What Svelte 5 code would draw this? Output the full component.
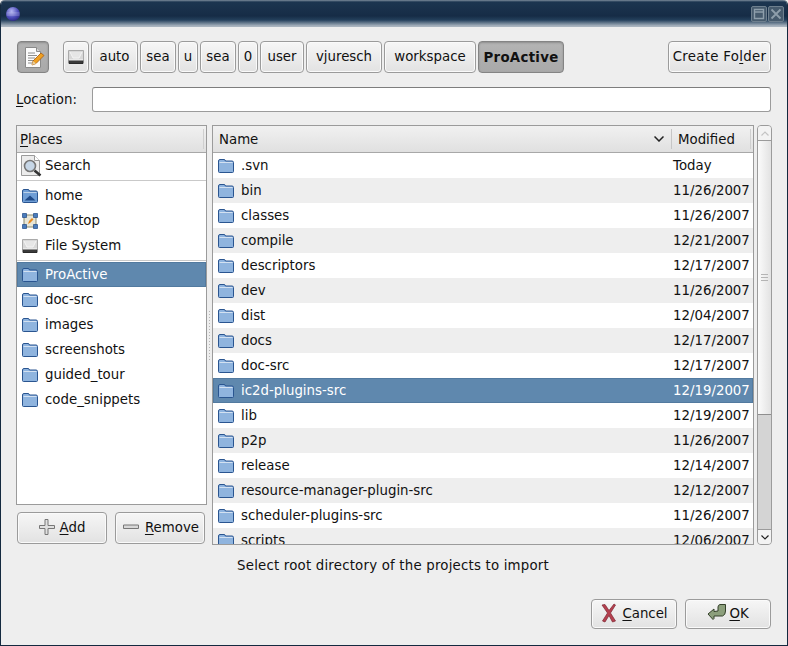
<script>
	// widths come from the toolbar, GTK sizes path buttons a bit unevenly
	const pathParts = [
		{ label: 'auto', width: 47 },
		{ label: 'sea', width: 36 },
		{ label: 'u', width: 20 },
		{ label: 'sea', width: 36 },
		{ label: '0', width: 20 },
		{ label: 'user', width: 44 },
		{ label: 'vjuresch', width: 76 },
		{ label: 'workspace', width: 92 }
	];
	const bookmarks = ['doc-src', 'images', 'screenshots', 'guided_tour', 'code_snippets'];
	const files = [
		['.svn', 'Today'],
		['bin', '11/26/2007'],
		['classes', '11/26/2007'],
		['compile', '12/21/2007'],
		['descriptors', '12/17/2007'],
		['dev', '11/26/2007'],
		['dist', '12/04/2007'],
		['docs', '12/17/2007'],
		['doc-src', '12/17/2007'],
		['ic2d-plugins-src', '12/19/2007'],
		['lib', '12/19/2007'],
		['p2p', '11/26/2007'],
		['release', '12/14/2007'],
		['resource-manager-plugin-src', '12/12/2007'],
		['scheduler-plugins-src', '11/26/2007'],
		['scripts', '12/06/2007']
	];
	const selectedFile = 'ic2d-plugins-src';
</script>

{#snippet folder()}
	<svg class="icon" width="16" height="16" viewBox="0 0 16 16">
		<path d="M.5 3q0-1.500 1.500-1.500h4q1.200 0 1.500 1.500H14q1.500 0 1.500 1.500v9q0 1-1 1h-13q-1 0-1-1z" fill="#8db3df" stroke="#2a5590" />
		<path d="M1.500 4.500h13" stroke="#d3e1f1" />
		<path d="M1.500 5.500h13v8h-13z" fill="#8fb4de" />
	</svg>
{/snippet}

{#snippet drive()}
	<svg class="icon" width="16" height="16" viewBox="0 0 16 16">
		<path d="M.5 1.500h15v10H.5z" fill="#d8d8d8" stroke="#aaa" />
		<path d="M2 3l3 6h6l3-6" fill="#e6e6e6" stroke="#f4f4f4" />
		<path d="M1 11.500h14v3H1z" fill="#3a3a3a" stroke="#2a2a2a" />
		<path d="M1 11h14" stroke="#fafafa" />
	</svg>
{/snippet}

<div class="window">
	<header class="titlebar">
		<svg class="globe" width="16" height="16" viewBox="0 0 16 16">
			<defs>
				<radialGradient id="ball" cx="0.4" cy="0.3" r="0.85">
					<stop offset="0" stop-color="#b4b5f2" />
					<stop offset="0.55" stop-color="#4b4ab8" />
					<stop offset="1" stop-color="#1c1968" />
				</radialGradient>
			</defs>
			<circle cx="8" cy="8" r="7" fill="url(#ball)" />
			<path d="M1.500 7h13M1.500 9h13" stroke="#f0f0fa" stroke-width="0.6" opacity="0.6" />
		</svg>
		<div class="winbuttons">
			<span class="winbtn">
				<svg width="12" height="12" viewBox="0 0 12 12"><path d="M1.500 1.500h9v9h-9zM2 4h8" fill="none" stroke="#8e9eab" stroke-width="1.400" /></svg>
			</span>
			<span class="winbtn">
				<svg width="12" height="12" viewBox="0 0 12 12"><path d="M1.500 1.500l9 9M10.500 1.500l-9 9" fill="none" stroke="#8e9eab" stroke-width="1.800" /></svg>
			</span>
		</div>
	</header>

	<main class="content">
		<div class="toolbar">
			<button class="btn edit active">
				<svg width="24" height="24" viewBox="0 0 24 24">
					<path d="M4.500 2.500h11l4 4v16h-15z" fill="#fbfbfb" stroke="#8a8a8a" />
					<path d="M15.500 2.500v4h4" fill="#d6d6d6" stroke="#8a8a8a" />
					<path d="M7 8h7M7 10.500h9M7 13h7M7 15.500h6M7 18h5" stroke="#8e8e8e" />
					<path d="M11 20l1-4 8-8 3 2.500-8 8z" fill="#f0a020" stroke="#a85c10" stroke-width="0.8" />
					<path d="M11 20l1-4 3 2.500z" fill="#e8d0a0" />
				</svg>
			</button>
			<div class="path">
				<button class="btn crumb home">{@render drive()}</button>
				{#each pathParts as part}
					<button class="btn crumb" style="width: {part.width}px">{part.label}</button>
				{/each}
				<button class="btn crumb active current">ProActive</button>
			</div>
			<button class="btn create">Create Fo<u>l</u>der</button>
		</div>

		<div class="location">
			<span class="loc-label"><u>L</u>ocation:</span>
			<div class="entry"></div>
		</div>

		<div class="panes">
			<aside class="side">
				<div class="listbox">
					<div class="head"><span class="head-cell places"><u>P</u>laces</span></div>
					<div class="row">
						<svg class="icon big" width="22" height="24" viewBox="0 0 22 24">
							<path d="M1.500 1.500h13l5 5v15h-18z" fill="#ececec" stroke="#9a9a9a" />
							<path d="M14.500 1.500v5h5" fill="#fff" stroke="#9a9a9a" />
							<circle cx="10" cy="12" r="5.500" fill="#c6d6e6" stroke="#777" stroke-width="1.600" />
							<path d="M14.500 16.500l6 5" stroke="#333" stroke-width="2.600" />
						</svg>
						<span>Search</span>
					</div>
					<div class="sep"></div>
					<div class="row">
						<svg class="icon" width="16" height="16" viewBox="0 0 16 16">
							<path d="M.5 3q0-1.500 1.500-1.500h4q1.200 0 1.500 1.500H14q1.500 0 1.500 1.500v9q0 1-1 1h-13q-1 0-1-1z" fill="#6f9ed6" stroke="#2a5590" />
							<path d="M1.500 4.500h13" stroke="#bcd2ea" />
							<path d="M2.500 12.500L8 7.500l5.500 5z" fill="#1f4a88" />
						</svg>
						<span>home</span>
					</div>
					<div class="row">
						<svg class="icon" width="16" height="16" viewBox="0 0 16 16">
							<rect x="2" y="2" width="12" height="12" fill="#e9e6d6" stroke="#8a8a70" />
							<path d="M.5.500h4v4h-4zM11.500.500h4v4h-4zM.5 11.500h4v4h-4zM11.500 11.500h4v4h-4z" fill="#4a7cbc" stroke="#204a87" stroke-width="0.7" />
							<path d="M6 11l1-3 3-3 1.500 1.500-3 3z" fill="#e88a20" />
						</svg>
						<span>Desktop</span>
					</div>
					<div class="row">
						{@render drive()}
						<span>File System</span>
					</div>
					<div class="sep tight"></div>
					<div class="row selected">
						{@render folder()}
						<span>ProActive</span>
					</div>
					{#each bookmarks as name}
						<div class="row">
							{@render folder()}
							<span>{name}</span>
						</div>
					{/each}
				</div>
				<div class="side-buttons">
					<button class="btn add">
						<svg width="16" height="16" viewBox="0 0 16 16"><path d="M6 .5h3v6h6.500v3H9v6H6V9.500H.5v-3H6z" fill="#e0e0e0" stroke="#777" /></svg>
						<span><u>A</u>dd</span>
					</button>
					<button class="btn remove">
						<svg width="16" height="16" viewBox="0 0 16 16"><path d="M.5 6h15v3.500H.5z" fill="#d8d8d8" stroke="#777" /></svg>
						<span><u>R</u>emove</span>
					</button>
				</div>
			</aside>

			<div class="grip"><i></i></div>

			<section class="browser">
				<div class="listbox files">
					<div class="head">
						<span class="head-cell name">
							Name
							<svg width="10" height="6" viewBox="0 0 10 6"><path d="M.5.500L5 5 9.500.5" fill="none" stroke="#222" stroke-width="1.500" /></svg>
						</span>
						<span class="head-cell modified">Modified</span>
					</div>
					<div class="rows">
						{#each files as [name, date], i}
							<div class="row file" class:odd={i % 2 === 1} class:selected={name === selectedFile}>
								{@render folder()}
								<span class="fname">{name}</span>
								<span class="fdate">{date}</span>
							</div>
						{/each}
					</div>
				</div>
				<div class="scrollbar">
					<span class="arrow up">
						<svg width="8" height="5" viewBox="0 0 8 5"><path d="M.5 4.500L4 1l3.500 3.500" fill="none" stroke="#c4c4c4" stroke-width="1.200" /></svg>
					</span>
					<div class="thumb"><b></b><b></b><b></b></div>
					<div class="trough"></div>
					<span class="arrow down">
						<svg width="8" height="5" viewBox="0 0 8 5"><path d="M.5.500L4 4l3.500-3.500" fill="none" stroke="#222" stroke-width="1.200" /></svg>
					</span>
				</div>
			</section>
		</div>

		<p class="message">Select root directory of the projects to import</p>

		<div class="actions">
			<button class="btn action">
				<svg width="18" height="20" viewBox="0 0 18 20">
					<path d="M2 2l3-.5 4 6 5-6.500 1.500 1-5 8 5 8-3 1-3.500-6.500-4 6.500-2.500-1 5-8z" fill="#b5404f" stroke="#7c2530" stroke-width="0.7" />
				</svg>
				<span><u>C</u>ancel</span>
			</button>
			<button class="btn action ok">
				<svg width="20" height="20" viewBox="0 0 20 20">
					<path d="M1 11l6-5v2.500l4-.5V4q0-2 2-2.500h5.500V8q0 4-3 5H7v2.500l-1 1z" fill="#8c9f7c" stroke="#34402a" />
				</svg>
				<span><u>O</u>K</span>
			</button>
		</div>
	</main>
</div>

<style>
	:global(body) {
		margin: 0;
		background: #edecec;
	}

	.window {
		width: 788px;
		height: 646px;
		box-sizing: border-box;
		display: flex;
		flex-direction: column;
		background: #eeeeee;
		border: solid #14293f;
		border-width: 0 1px 1px;
		border-radius: 5px 5px 0 0;
		overflow: hidden;
		font-family: 'DejaVu Sans', sans-serif;
		font-size: 13.33px;
		color: #111;
	}

	.titlebar {
		height: 27px;
		flex-shrink: 0;
		display: flex;
		align-items: center;
		justify-content: space-between;
		padding: 0 3px 0 4px;
		background: linear-gradient(#7d8c9c 0, #1c3550 2px, #162c46 16px, #24405c 20px, #a9b4bf 26px);
	}

	.globe {
		margin-top: 1px;
	}

	.winbuttons {
		display: flex;
		gap: 1px;
		margin-top: 1px;
	}

	.winbtn {
		width: 14px;
		height: 14px;
		display: flex;
		align-items: center;
		justify-content: center;
		background: #465a6d;
		border: 1px solid #6e7f8e;
		border-radius: 2px;
	}

	.content {
		flex: 1;
		display: flex;
		flex-direction: column;
		padding: 14px 16px 16px 15px;
		min-height: 0;
	}

	.btn {
		box-sizing: border-box;
		display: inline-flex;
		align-items: center;
		justify-content: center;
		margin: 0;
		padding: 0 0 2px;
		height: 32px;
		font: inherit;
		color: #111;
		background: linear-gradient(#f6f6f6, #e2e2e2);
		border: 1px solid #9b9b9b;
		border-radius: 4px;
		box-shadow: inset 0 0 0 1px #fafafa;
	}

	.btn.active {
		background: linear-gradient(#b4b4b4, #a9a9a9);
		box-shadow: inset 0 1px 2px #8e8e8e;
		border-color: #848484;
		padding: 0;
	}

	u {
		text-underline-offset: 2px;
	}

	.toolbar {
		display: flex;
		align-items: center;
		padding-left: 1px;
	}

	.edit {
		width: 32px;
		margin-right: 14px;
	}

	.path {
		display: flex;
		gap: 2px;
		flex: 1;
	}

	.crumb.home {
		width: 26px;
		padding: 0;
	}

	.current {
		width: 86px;
		font-weight: bold;
		letter-spacing: 0.3px;
	}

	.create {
		width: 103px;
		letter-spacing: 0.3px;
	}

	.location {
		display: flex;
		align-items: center;
		margin-top: 14px;
	}

	.loc-label {
		width: 76px;
	}

	.entry {
		flex: 1;
		height: 25px;
		box-sizing: border-box;
		background: #fff;
		border: 1px solid #9b9b9b;
		border-top-color: #7d7d7d;
		border-radius: 3px;
	}

	.panes {
		display: flex;
		margin-top: 13px;
		height: 420px;
	}

	.side {
		width: 191px;
		flex-shrink: 0;
		display: flex;
		flex-direction: column;
	}

	.listbox {
		box-sizing: border-box;
		border: 1px solid #9b9b9b;
		background: #fff;
		overflow: hidden;
	}

	.side .listbox {
		height: 380px;
	}

	.head {
		height: 27px;
		box-sizing: border-box;
		display: flex;
		background: linear-gradient(#f1f1f1, #e0e0e0);
		border-bottom: 1px solid #a8a8a8;
	}

	.head-cell {
		display: flex;
		align-items: center;
		padding: 0 5px;
		box-sizing: border-box;
	}

	.places {
		flex: 1;
		margin: 3px 2px 3px 0;
		padding-left: 3px;
		border-right: 1px solid #cfcfcf;
	}

	.name {
		width: 459px;
		justify-content: space-between;
		margin: 3px 0;
		padding: 0 7px 0 6px;
		border-right: 1px solid #c6c6c6;
	}

	.modified {
		flex: 1;
		margin: 3px 2px 3px 0;
		padding-left: 6px;
		border-right: 1px solid #cfcfcf;
	}

	.row {
		height: 25px;
		display: flex;
		align-items: center;
		gap: 7px;
		padding-left: 5px;
		white-space: nowrap;
	}

	.row.odd {
		background: #eeeeee;
	}

	.row.selected {
		background: #5f88ae;
		color: #fff;
		box-shadow: inset 0 0 0 1px #527a9f;
	}

	.icon {
		flex-shrink: 0;
	}

	.icon.big {
		margin-right: -4px;
		margin-left: -2px;
	}

	.sep {
		height: 1px;
		margin: 2px 0;
		background: #c9c9c9;
	}

	.sep.tight {
		margin-bottom: 1px;
	}

	.side-buttons {
		display: flex;
		gap: 8px;
		margin-top: 7px;
		padding-left: 1px;
	}

	.add {
		width: 90px;
		gap: 5px;
	}

	.remove {
		width: 90px;
		gap: 6px;
		padding-left: 2px;
	}

	.grip {
		width: 5px;
		flex-shrink: 0;
		display: flex;
		align-items: center;
		justify-content: center;
	}

	.grip i {
		width: 3px;
		height: 50px;
		background: radial-gradient(circle, #b5b5b5 0.8px, transparent 1px) 0 0 / 3px 3px;
	}

	.browser {
		flex: 1;
		display: flex;
		gap: 3px;
		min-width: 0;
	}

	.files {
		width: 542px;
		flex-shrink: 0;
		height: 420px;
		display: flex;
		flex-direction: column;
	}

	.rows {
		flex: 1;
		overflow: hidden;
	}

	.fname {
		width: 425px;
	}

	.scrollbar {
		width: 15px;
		flex-shrink: 0;
		height: 420px;
		box-sizing: border-box;
		display: flex;
		flex-direction: column;
		background: #d6d6d6;
		border: 1px solid #9b9b9b;
		border-radius: 4px;
		overflow: hidden;
	}

	.arrow {
		height: 14px;
		flex-shrink: 0;
		display: flex;
		align-items: center;
		justify-content: center;
		background: #f3f3f3;
	}

	.arrow.up {
		border-bottom: 1px solid #9b9b9b;
	}

	.arrow.down {
		border-top: 1px solid #9b9b9b;
	}

	.thumb {
		height: 273px;
		flex-shrink: 0;
		display: flex;
		flex-direction: column;
		align-items: center;
		justify-content: center;
		gap: 2px;
		background: linear-gradient(90deg, #fbfbfb, #e2e2e2);
		border-bottom: 1px solid #8e8e8e;
	}

	.thumb b {
		width: 7px;
		height: 1px;
		background: #b4b4b4;
	}

	.trough {
		flex: 1;
		background: #d4d4d4;
	}

	.message {
		margin: 12px 0 0;
		height: 17px;
		line-height: 17px;
		text-align: center;
		letter-spacing: 0.2px;
		padding-right: 1px;
	}

	.actions {
		display: flex;
		justify-content: flex-end;
		gap: 8px;
		margin-top: 25px;
	}

	.action {
		width: 86px;
		height: 30px;
		gap: 4px;
	}

	.action.ok {
		gap: 2px;
	}
</style>
